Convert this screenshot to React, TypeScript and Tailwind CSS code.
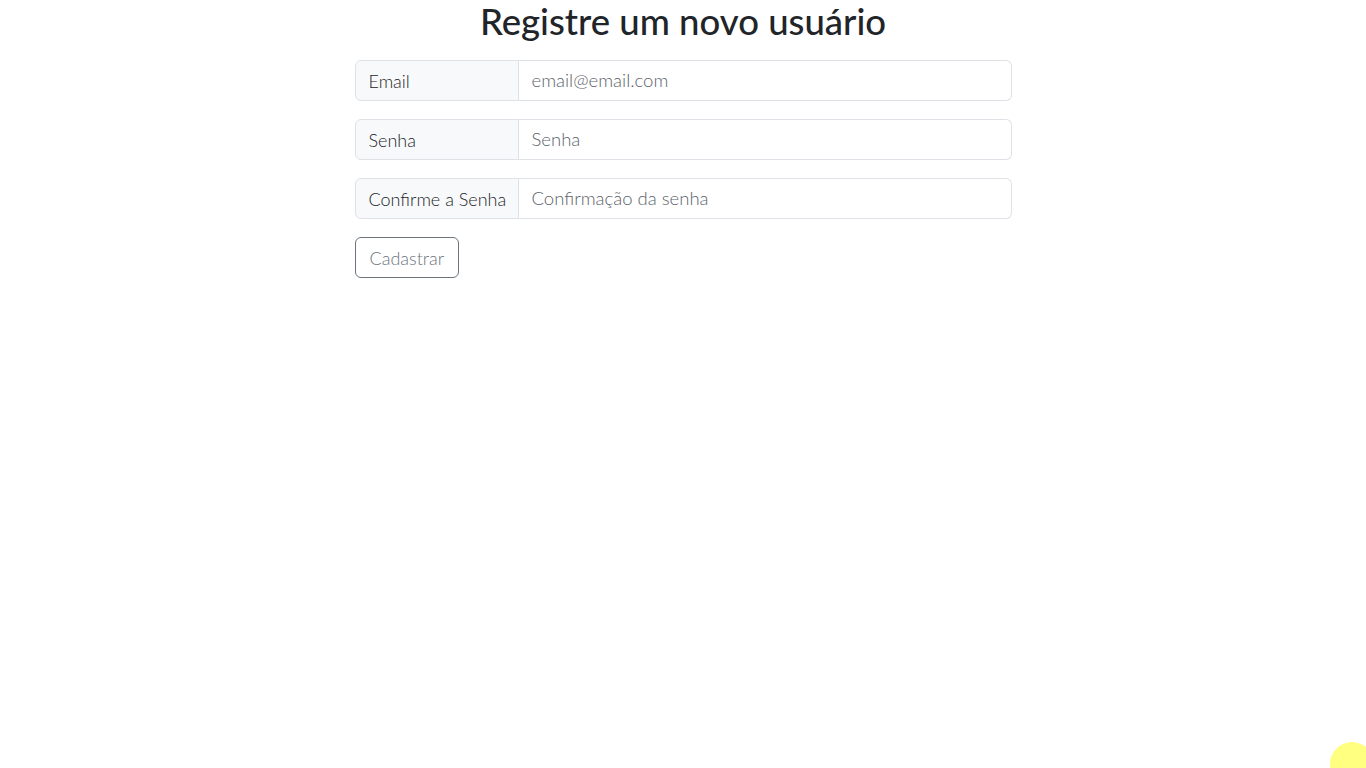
import React from 'react';

const fields = [
  { label: 'Email', placeholder: 'email@email.com', type: 'email' },
  { label: 'Senha', placeholder: 'Senha', type: 'password' },
  { label: 'Confirme a Senha', placeholder: 'Confirmação da senha', type: 'password' },
];

export default function App() {
  return (
    <div className="min-h-screen bg-white text-[#212529] font-['Lato',sans-serif]">
      <main className="w-[657px] mx-auto">
        <h1 className="text-center text-[36.5px] leading-[43px] font-medium mb-[17px]">
          Registre um novo usuário
        </h1>
        <form className="flex flex-col gap-[18px]" onSubmit={(e) => e.preventDefault()}>
          {fields.map((f) => (
            <div key={f.label} className="flex h-[41px]">
              <span className="w-[164px] shrink-0 flex items-center whitespace-nowrap pl-[13px] pr-[6px] pt-[2px] bg-[#f8f9fa] border border-[#dee2e6] rounded-l-[6px] text-[18px] font-light text-[#212529]">
                {f.label}
              </span>
              <input
                type={f.type}
                placeholder={f.placeholder}
                className="flex-1 min-w-0 px-[13px] pt-[1px] border border-l-0 border-[#dee2e6] rounded-r-[6px] text-[18.5px] font-light placeholder:text-[#5c636a] outline-none"
              />
            </div>
          ))}
          <div>
            <button
              type="submit"
              className="h-[41px] px-[14px] pt-[1px] border border-[#6c757d] rounded-[6px] text-[18px] font-light text-[#6c757d]"
            >
              Cadastrar
            </button>
          </div>
        </form>
      </main>
      <div className="fixed left-[1330px] top-[742px] w-[44px] h-[44px] rounded-full bg-[#ffff80]" />
    </div>
  );
}
